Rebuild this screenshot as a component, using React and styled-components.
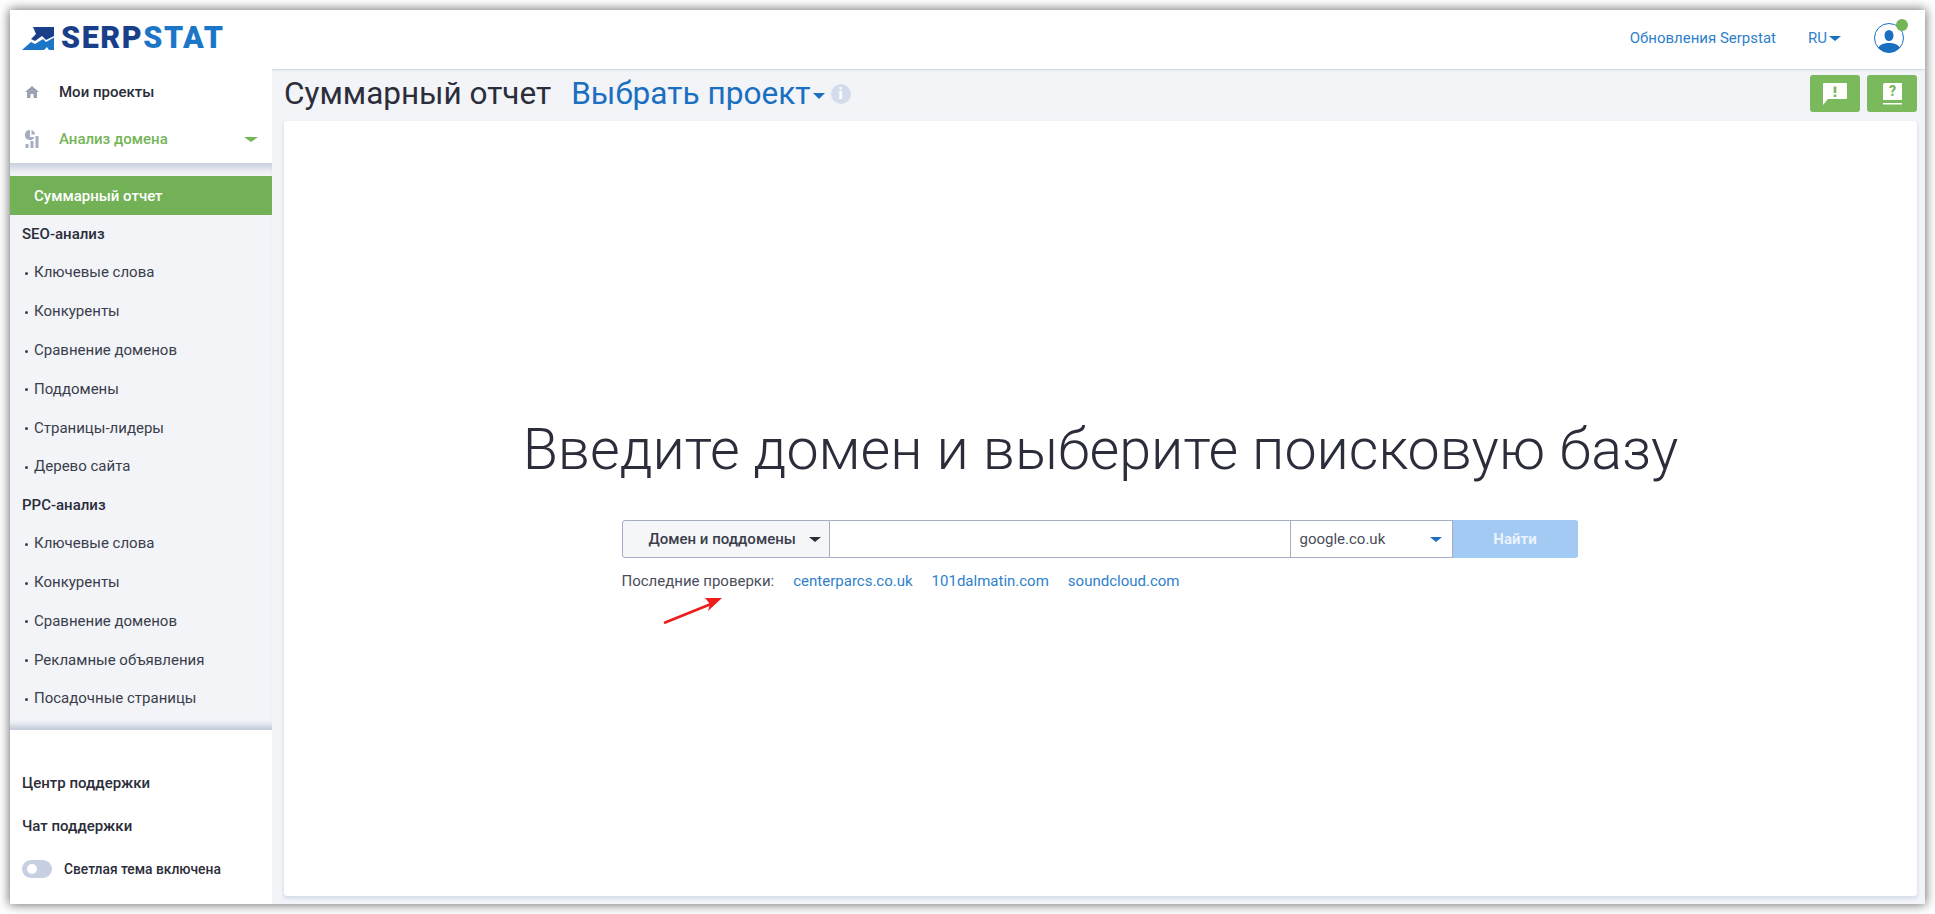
import React from 'react';
import styled, { createGlobalStyle } from 'styled-components';

const Global = createGlobalStyle`
  html, body { margin: 0; padding: 0; background: #fff; }
  body { font-family: Roboto, "Liberation Sans", sans-serif; color: #2b2d3a; }
  * { box-sizing: border-box; }
`;

const Page = styled.div`
  width: 1935px;
  height: 914px;
  padding: 10px;
  overflow: hidden;
`;

const Frame = styled.div`
  width: 1915px;
  height: 894px;
  display: flex;
  flex-direction: column;
  background: #fff;
  box-shadow: 0 0 10px 1px rgba(0, 0, 0, 0.55);
`;

const Header = styled.header`
  height: 59px;
  flex: none;
  display: flex;
  align-items: center;
  padding: 0 12px 3px 12px;
`;

const Logo = styled.div`
  display: flex;
  align-items: center;
  gap: 7px;
`;

const LogoText = styled.div`
  font-family: Roboto, sans-serif;
  font-weight: 900;
  font-size: 30.5px;
  line-height: 30px;
  letter-spacing: 1.6px;
  color: #193f8a;
  span { color: #1c76c8; }
`;

const HeaderRight = styled.div`
  margin-left: auto;
  display: flex;
  align-items: center;
`;

const Updates = styled.a`
  font-size: 15px;
  color: #2f7fca;
  margin-right: 32px;
`;

const Lang = styled.div`
  display: flex;
  align-items: center;
  gap: 2px;
  font-size: 15px;
  color: #2f7fca;
  margin-right: 33px;
`;

const Avatar = styled.div`
  position: relative;
  width: 30px;
  height: 30px;
  margin-right: 9px;
`;

const OnlineDot = styled.span`
  position: absolute;
  top: -4px;
  right: -4px;
  width: 12px;
  height: 12px;
  border-radius: 50%;
  background: #74b556;
`;

const Body = styled.div`
  flex: 1;
  display: flex;
  min-height: 0;
`;

const Sidebar = styled.aside`
  width: 262px;
  flex: none;
  display: flex;
  flex-direction: column;
  background: #fff;
`;

const TopItem = styled.div`
  height: ${p => p.$height}px;
  display: flex;
  align-items: center;
  padding: 0 14px 0 15px;
  font-size: 15px;
  font-weight: 500;
  color: ${p => (p.$accent ? '#74b556' : '#2b2d3a')};
`;

const ItemIcon = styled.span`
  width: 34px;
  flex: none;
  display: flex;
  align-items: center;
`;

const Caret = styled.span`
  margin-left: auto;
  width: 0;
  height: 0;
  border-left: ${p => p.$size}px solid transparent;
  border-right: ${p => p.$size}px solid transparent;
  border-top: ${p => p.$size * 0.85}px solid ${p => p.$color};
`;

const MenuPanel = styled.div`
  background: #f2f4f8;
  box-shadow: inset 0 11px 7px -6px #c6cedc, inset 0 -9px 6px -5px #bcc5d5;
  padding: 13px 0 12.6px;
`;

const ActiveItem = styled.div`
  height: 39px;
  display: flex;
  align-items: center;
  padding-left: 24px;
  background: #72b155;
  color: #fff;
  font-size: 15px;
  font-weight: 500;
`;

const SectionTitle = styled.div`
  height: 38px;
  display: flex;
  align-items: center;
  padding-left: 12px;
  font-size: 15px;
  font-weight: 500;
  color: #2b2d3a;
`;

const SubItem = styled.div`
  height: 38.8px;
  display: flex;
  align-items: center;
  padding-left: 24px;
  font-size: 15px;
  color: #3a3d4b;
  position: relative;
  &::before {
    content: '';
    position: absolute;
    left: 15px;
    top: 19px;
    width: 3px;
    height: 3px;
    border-radius: 50%;
    background: #3a3d4b;
  }
`;

const SidebarFoot = styled.div`
  flex: 1;
  display: flex;
  flex-direction: column;
  padding: 31px 12px 0;
`;

const FootLink = styled.div`
  height: 43px;
  display: flex;
  align-items: center;
  font-size: 15px;
  font-weight: 500;
  color: #2b2d3a;
`;

const ThemeRow = styled.div`
  height: 43px;
  display: flex;
  align-items: center;
  gap: 12px;
  font-size: 13.8px;
  font-weight: 500;
  color: #2b2d3a;
`;

const Toggle = styled.span`
  width: 30px;
  height: 18px;
  border-radius: 9px;
  background: #c6d0e2;
  position: relative;
  &::after {
    content: '';
    position: absolute;
    left: 5px;
    top: 4px;
    width: 10px;
    height: 10px;
    border-radius: 50%;
    background: #fff;
  }
`;

const Main = styled.main`
  flex: 1;
  min-width: 0;
  display: flex;
  flex-direction: column;
  background: #f2f4f8;
  box-shadow: inset 0 2px 2px -1px #cfd4dd;
  padding: 0 8px 8px 12px;
`;

const TitleRow = styled.div`
  height: 52px;
  flex: none;
  display: flex;
  align-items: center;
  padding-bottom: 3px;
`;

const PageTitle = styled.h1`
  margin: 0;
  font-size: 31.5px;
  font-weight: 400;
  color: #2b2d3a;
`;

const ProjectPicker = styled.div`
  margin-left: 20px;
  display: flex;
  align-items: center;
  font-size: 31.6px;
  color: #1a6fc0;
`;

const SmallCaret = styled.span`
  width: 0;
  height: 0;
  margin: 4px 0 0 2px;
  border-left: 6px solid transparent;
  border-right: 6px solid transparent;
  border-top: 6px solid #1a6fc0;
`;

const InfoBadge = styled.span`
  width: 20px;
  height: 20px;
  margin-left: 6px;
  border-radius: 50%;
  background: #d3dceb;
  color: #fff;
  font-family: "Liberation Serif", serif;
  font-size: 16px;
  font-weight: 700;
  line-height: 20px;
  text-align: center;
`;

const ActionButtons = styled.div`
  margin-left: auto;
  display: flex;
  gap: 7px;
`;

const ActionButton = styled.button`
  width: 50px;
  height: 37px;
  padding: 0;
  border: none;
  border-radius: 3px;
  background: #7ab95c;
  display: flex;
  align-items: center;
  justify-content: center;
`;

const Card = styled.section`
  flex: 1;
  min-height: 0;
  display: flex;
  flex-direction: column;
  align-items: center;
  background: #fff;
  border-radius: 3px;
  box-shadow: 0 2px 3px 1px #d9dfec;
  padding-top: 295px;
`;

const Headline = styled.h2`
  margin: 0;
  font-size: 57.4px;
  line-height: 68px;
  font-weight: 300;
  color: #2b2d3a;
`;

const SearchBlock = styled.div`
  width: 956px;
  margin: 36px 2px 0 0;
`;

const SearchRow = styled.div`
  height: 38px;
  display: flex;
`;

const ModeSelect = styled.div`
  width: 208px;
  flex: none;
  display: flex;
  align-items: center;
  padding: 0 8px 0 26px;
  background: #f5f6f8;
  border: 1px solid #a5adc3;
  border-radius: 3px 0 0 3px;
  font-size: 15px;
  font-weight: 500;
  white-space: nowrap;
  color: #3a3d4b;
`;

const SearchInput = styled.input`
  flex: 1;
  min-width: 0;
  border: 1px solid #a5adc3;
  border-left: none;
  outline: none;
  background: #fff;
`;

const EngineSelect = styled.div`
  width: 162px;
  flex: none;
  display: flex;
  align-items: center;
  padding: 0 10px 0 9px;
  border: 1px solid #a5adc3;
  border-left: none;
  font-size: 15px;
  color: #4a4d5b;
`;

const FindButton = styled.button`
  width: 125px;
  flex: none;
  border: none;
  border-radius: 0 3px 3px 0;
  background: #a2caf3;
  color: #eaf3fd;
  font-family: inherit;
  font-size: 15px;
  font-weight: 700;
`;

const Recent = styled.div`
  display: flex;
  align-items: center;
  margin-top: 14px;
  font-size: 15px;
  color: #4a4d5b;
  position: relative;
`;

const RecentLink = styled.a`
  margin-left: 19px;
  color: #2f7fca;
`;

const Arrow = styled.svg`
  position: absolute;
  left: 40px;
  top: 24px;
`;

const seoItems = ['Ключевые слова', 'Конкуренты', 'Сравнение доменов', 'Поддомены', 'Страницы-лидеры', 'Дерево сайта'];
const ppcItems = ['Ключевые слова', 'Конкуренты', 'Сравнение доменов', 'Рекламные объявления', 'Посадочные страницы'];

const LogoMark = () => (
  <svg width="32" height="23" viewBox="0 0 32 23">
    <path d="M11 0H32V9L24 13 20 9 13 14 9 12 14 7Z" fill="#193f8a" />
    <path d="M0 23 9 15 13 17 21 12 24 15 32 10.500V23H27L25 20 22 23Z" fill="#1c76c8" />
  </svg>
);

const HomeIcon = () => (
  <svg width="14" height="12" viewBox="0 0 14 12">
    <path d="M7 0 14 6H12V12H8.500V8H5.500V12H2V6H0Z" fill="#9aa2b4" />
  </svg>
);

const ChartIcon = () => (
  <svg width="14" height="18" viewBox="0 0 14 18">
    <path d="M5 0A5 5 0 1 0 9.500 7H5Z" fill="#a5adbf" />
    <path d="M6.500 0A5 5 0 0 1 10 4.500H6.500Z" fill="#a5adbf" />
    <rect x="0.500" y="14" width="3" height="4" fill="#a5adbf" />
    <rect x="5.500" y="11" width="3" height="7" fill="#a5adbf" />
    <rect x="10.500" y="6" width="3" height="12" fill="#a5adbf" />
  </svg>
);

const UserIcon = () => (
  <svg width="30" height="30" viewBox="0 0 30 30">
    <defs>
      <clipPath id="avatar-clip"><circle cx="15" cy="15" r="14.500" /></clipPath>
    </defs>
    <circle cx="15" cy="15" r="14.500" fill="#fff" stroke="#1a6fc0" strokeWidth="1" />
    <g clipPath="url(#avatar-clip)" fill="#1a6fc0">
      <ellipse cx="15" cy="12.500" rx="4.500" ry="5.500" />
      <path d="M3 30C3 22 9 20 15 20S27 22 27 30Z" />
    </g>
  </svg>
);

const AlertIcon = () => (
  <svg width="24" height="22" viewBox="0 0 24 22">
    <path d="M1 0H23A1 1 0 0 1 24 1V15A1 1 0 0 1 23 16H5L0 22V1A1 1 0 0 1 1 0Z" fill="#fff" />
    <rect x="10.700" y="3.500" width="2.600" height="6.500" fill="#7ab95c" />
    <rect x="10.700" y="11.500" width="2.600" height="2.500" fill="#7ab95c" />
  </svg>
);

const GuideIcon = () => (
  <svg width="19" height="22" viewBox="0 0 19 22">
    <path d="M2 0H19V17H0V2A2 2 0 0 1 2 0Z" fill="#fff" />
    <rect x="0" y="20" width="19" height="1.500" fill="#fff" />
    <text x="9.500" y="13" textAnchor="middle" fontFamily="Roboto" fontWeight="900" fontSize="14" fill="#7ab95c">?</text>
  </svg>
);

export default function App() {
  return (
    <>
      <Global />
      <Page>
        <Frame>
          <Header>
            <Logo>
              <LogoMark />
              <LogoText>SERP<span>STAT</span></LogoText>
            </Logo>
            <HeaderRight>
              <Updates>Обновления Serpstat</Updates>
              <Lang>RU<Caret $size={6.500} $color="#1a6fc0" /></Lang>
              <Avatar>
                <UserIcon />
                <OnlineDot />
              </Avatar>
            </HeaderRight>
          </Header>
          <Body>
            <Sidebar>
              <TopItem $height={46}><ItemIcon><HomeIcon /></ItemIcon>Мои проекты</TopItem>
              <TopItem $height={48} $accent><ItemIcon><ChartIcon /></ItemIcon>Анализ домена<Caret $size={7} $color="#74b556" /></TopItem>
              <MenuPanel>
                <ActiveItem>Суммарный отчет</ActiveItem>
                <SectionTitle>SEO-анализ</SectionTitle>
                {seoItems.map(item => <SubItem key={item}>{item}</SubItem>)}
                <SectionTitle>PPC-анализ</SectionTitle>
                {ppcItems.map(item => <SubItem key={item}>{item}</SubItem>)}
              </MenuPanel>
              <SidebarFoot>
                <FootLink>Центр поддержки</FootLink>
                <FootLink>Чат поддержки</FootLink>
                <ThemeRow><Toggle />Светлая тема включена</ThemeRow>
              </SidebarFoot>
            </Sidebar>
            <Main>
              <TitleRow>
                <PageTitle>Суммарный отчет</PageTitle>
                <ProjectPicker>Выбрать проект<SmallCaret /><InfoBadge>i</InfoBadge></ProjectPicker>
                <ActionButtons>
                  <ActionButton><AlertIcon /></ActionButton>
                  <ActionButton><GuideIcon /></ActionButton>
                </ActionButtons>
              </TitleRow>
              <Card>
                <Headline>Введите домен и выберите поисковую базу</Headline>
                <SearchBlock>
                  <SearchRow>
                    <ModeSelect>Домен и поддомены<Caret $size={6.500} $color="#2b2d3a" /></ModeSelect>
                    <SearchInput />
                    <EngineSelect>google.co.uk<Caret $size={6.500} $color="#1a6fc0" /></EngineSelect>
                    <FindButton>Найти</FindButton>
                  </SearchRow>
                  <Recent>
                    Последние проверки:
                    <RecentLink>centerparcs.co.uk</RecentLink>
                    <RecentLink>101dalmatin.com</RecentLink>
                    <RecentLink>soundcloud.com</RecentLink>
                    <Arrow width="62" height="30" viewBox="0 0 62 30">
                      <path d="M2 27 49 8" stroke="#ee1c1c" strokeWidth="2.500" fill="none" />
                      <path d="M60 2 43 2 48 8 46 15Z" fill="#ee1c1c" />
                    </Arrow>
                  </Recent>
                </SearchBlock>
              </Card>
            </Main>
          </Body>
        </Frame>
      </Page>
    </>
  );
}
